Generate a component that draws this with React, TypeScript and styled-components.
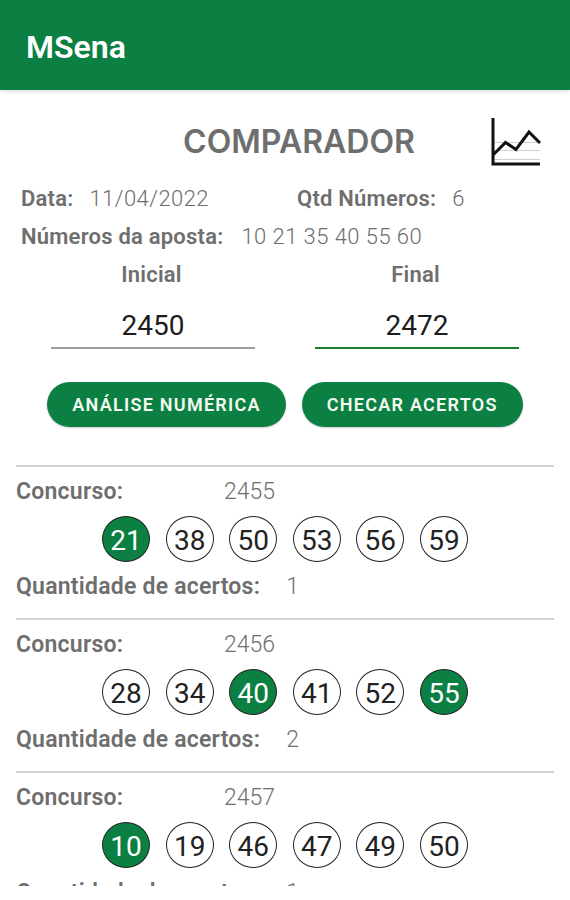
import React from "react";
import styled, { createGlobalStyle } from "styled-components";

const GREEN = "#0c8042";
const GREY = "#6e6e6e";

const GlobalStyle = createGlobalStyle`
  * { box-sizing: border-box; }
  body { margin: 0; background: #fff; font-family: Roboto, sans-serif; }
`;

const Screen = styled.div`
  display: flex;
  flex-direction: column;
  height: 100vh;
  padding-bottom: 14px;
  overflow: hidden;
`;

const AppBar = styled.header`
  flex: none;
  display: flex;
  align-items: center;
  height: 90px;
  padding: 4px 26px 0;
  background: ${GREEN};
  box-shadow: 0 1px 5px rgba(0, 0, 0, 0.16);
`;

const AppName = styled.h1`
  margin: 0;
  color: #fff;
  font-size: 32px;
  font-weight: 600;
  line-height: 38px;
`;

const TitleRow = styled.div`
  flex: none;
  display: grid;
  grid-template-columns: 1fr auto 1fr;
  align-items: center;
  padding: 28px 28px 0 56px;
`;

const Title = styled.h2`
  grid-column: 2;
  margin: 0;
  color: ${GREY};
  font-family: Inter, sans-serif;
  font-size: 32px;
  font-weight: 600;
  line-height: 48px;
`;

const ChartButton = styled.button`
  justify-self: end;
  display: block;
  width: 52px;
  height: 48px;
  padding: 0;
  border: 0;
  background: none;
`;

const Details = styled.dl`
  flex: none;
  display: grid;
  grid-template-columns: 276px 1fr;
  margin: 0;
  padding: 14px 21px 0;
`;

const Detail = styled.div<{ $wide?: boolean }>`
  display: flex;
  gap: ${(p) => (p.$wide ? 18 : 16)}px;
  grid-column: ${(p) => (p.$wide ? "1 / -1" : "auto")};
  line-height: 38px;
`;

const Term = styled.dt`
  color: ${GREY};
  font-size: 22px;
  font-weight: 600;
  letter-spacing: 0.01em;
`;

const Value = styled.dd`
  margin: 0;
  color: ${GREY};
  font-size: 22px;
  font-weight: 300;
  letter-spacing: 0.02em;
`;

const Range = styled.div`
  flex: none;
  display: grid;
  grid-template-columns: 1fr 1fr;
  gap: 60px;
  padding: 0 51px;
`;

const Field = styled.div`
  display: flex;
  flex-direction: column;
`;

const FieldLabel = styled.label`
  padding-right: 3px;
  color: ${GREY};
  font-size: 22px;
  font-weight: 600;
  line-height: 38px;
  letter-spacing: 0.01em;
  text-align: center;
`;

const FieldInput = styled.input<{ $active?: boolean }>`
  width: 100%;
  height: 55px;
  padding: 9px 0 0;
  border: 0;
  border-bottom: 2px solid ${(p) => (p.$active ? "#187f2c" : "#a0a0a0")};
  outline: none;
  background: none;
  color: #1c1c1c;
  font: 400 28px Roboto, sans-serif;
  text-align: center;
`;

const Actions = styled.div`
  flex: none;
  display: flex;
  justify-content: center;
  gap: 16px;
  padding: 33px 0 38px;
`;

const PillButton = styled.button`
  height: 45px;
  padding: 0 25px;
  border: 0;
  border-radius: 23px;
  background: ${GREEN};
  box-shadow: 0 1px 2px rgba(0, 0, 0, 0.2);
  color: #f4fbf2;
  font: 600 18px Roboto, sans-serif;
  letter-spacing: 0.07em;
  text-transform: uppercase;
`;

const DrawList = styled.ul`
  flex: 1;
  min-height: 0;
  margin: 0 16px;
  padding: 0;
  overflow: hidden;
  list-style: none;
`;

const Draw = styled.li`
  padding: 12px 0 18px;
  border-top: 2px solid #d2d2d2;
`;

const Line = styled.div<{ $columns?: boolean }>`
  display: grid;
  grid-template-columns: ${(p) => (p.$columns ? "208px 1fr" : "auto 1fr")};
  column-gap: ${(p) => (p.$columns ? 0 : 26)}px;
  line-height: 26px;
`;

const DrawLabel = styled.span`
  color: ${GREY};
  font-size: 23px;
  font-weight: 600;
  letter-spacing: 0.01em;
`;

const DrawValue = styled.span`
  color: ${GREY};
  font-size: 23px;
  font-weight: 300;
`;

const Balls = styled.div`
  display: flex;
  justify-content: space-between;
  width: 68%;
  margin: 11px auto 12px;
`;

const Ball = styled.span<{ $hit: boolean }>`
  display: flex;
  align-items: center;
  justify-content: center;
  width: 48px;
  height: 46px;
  padding-top: 2px;
  border: 1px solid #222;
  border-radius: 50%;
  background: ${(p) => (p.$hit ? GREEN : "#fff")};
  color: ${(p) => (p.$hit ? "#fff" : "#222")};
  font-size: 28px;
`;

const bet = [10, 21, 35, 40, 55, 60];

const draws = [
  { id: 2455, numbers: [21, 38, 50, 53, 56, 59] },
  { id: 2456, numbers: [28, 34, 40, 41, 52, 55] },
  { id: 2457, numbers: [10, 19, 46, 47, 49, 50] },
];

function ChartIcon() {
  return (
    <svg width="52" height="48" viewBox="0 0 52 48" fill="none" aria-hidden="true">
      <path d="M3 24.500H50M3 32.500H50M3 41.500H50" stroke="#cfcfcf" strokeWidth="1" />
      <path d="M3 0V46H50" stroke="#111" strokeWidth="3" />
      <path d="M3 37L15.500 24.500L26 31.500L39 14L50 25" stroke="#111" strokeWidth="3" />
    </svg>
  );
}

export default function App() {
  return (
    <>
      <GlobalStyle />
      <Screen>
        <AppBar>
          <AppName>MSena</AppName>
        </AppBar>
        <TitleRow>
          <Title>COMPARADOR</Title>
          <ChartButton type="button" aria-label="Gráfico">
            <ChartIcon />
          </ChartButton>
        </TitleRow>
        <Details>
          <Detail>
            <Term>Data:</Term>
            <Value>11/04/2022</Value>
          </Detail>
          <Detail>
            <Term>Qtd Números:</Term>
            <Value>6</Value>
          </Detail>
          <Detail $wide>
            <Term>Números da aposta:</Term>
            <Value>{bet.join(" ")}</Value>
          </Detail>
        </Details>
        <Range>
          <Field>
            <FieldLabel htmlFor="first">Inicial</FieldLabel>
            <FieldInput id="first" inputMode="numeric" defaultValue="2450" />
          </Field>
          <Field>
            <FieldLabel htmlFor="last">Final</FieldLabel>
            <FieldInput id="last" inputMode="numeric" defaultValue="2472" $active />
          </Field>
        </Range>
        <Actions>
          <PillButton type="button">Análise numérica</PillButton>
          <PillButton type="button">Checar acertos</PillButton>
        </Actions>
        <DrawList>
          {draws.map((draw) => (
            <Draw key={draw.id}>
              <Line $columns>
                <DrawLabel>Concurso:</DrawLabel>
                <DrawValue>{draw.id}</DrawValue>
              </Line>
              <Balls>
                {draw.numbers.map((n) => (
                  <Ball key={n} $hit={bet.includes(n)}>
                    {n}
                  </Ball>
                ))}
              </Balls>
              <Line>
                <DrawLabel>Quantidade de acertos:</DrawLabel>
                <DrawValue>{draw.numbers.filter((n) => bet.includes(n)).length}</DrawValue>
              </Line>
            </Draw>
          ))}
        </DrawList>
      </Screen>
    </>
  );
}
